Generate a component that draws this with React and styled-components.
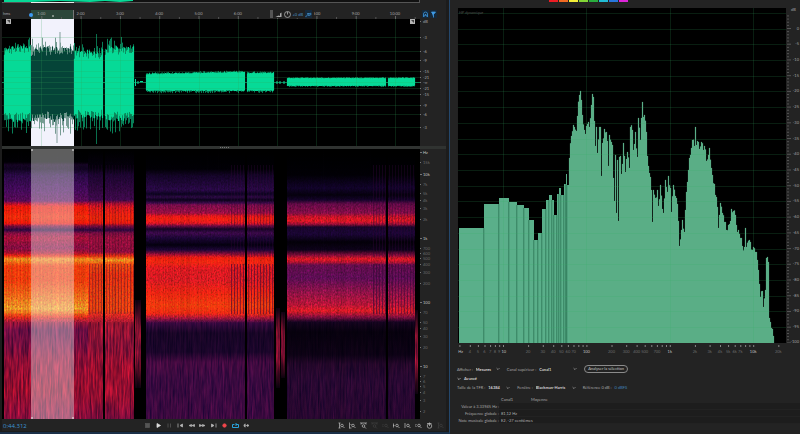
import React from "react";
import styled, { createGlobalStyle } from "styled-components";

const GlobalStyle = createGlobalStyle`
  * {
    box-sizing: border-box;
  }

  body {
    margin: 0;
    background: #232323;
    color: #a6a6a6;
    font-family: Lato, "Liberation Sans", sans-serif;
    font-size: 4px;
    line-height: 7px;
  }

  button,
  select {
    margin: 0;
    padding: 0;
    border: 0;
    background: none;
    color: inherit;
    font: inherit;
  }
`;

const Workspace = styled.main`
  display: grid;
  grid-template-columns: 9fr 7fr;
  grid-template-rows: minmax(0, 1fr);
  height: 100vh;
`;

const Editor = styled.section`
  display: grid;
  grid-template-columns: minmax(0, 1fr) 26px;
  grid-template-rows: 9px 10px minmax(0, 127fr) 3px minmax(0, 270fr) 12px;
  padding: 0 3px 1px 2px;
  border-right: 1px solid #24476b;
  border-bottom: 2px solid #1b3048;
  background: #1c1c1c;
`;

const Plot = styled.svg`
  display: block;
  width: 100%;
  height: 100%;
  min-height: 0;
  background: #000;
`;

const Scale = styled.svg`
  display: block;
  width: 100%;
  height: 100%;
  min-height: 0;
  background: #232323;
  fill: ${({ $dim }) => ($dim ? "#6c6c6c" : "#a6a6a6")};
  font-size: 4px;
`;

const Overview = styled.div`
  background: #232323;
`;

const OverviewTrack = styled.svg`
  display: block;
  width: 100%;
  height: 4px;
`;

const Corner = styled.div`
  background: #232323;
`;

const Ruler = styled.div`
  position: relative;
  min-width: 0;
`;

const Hud = styled.div`
  position: absolute;
  top: 1px;
  left: 64%;
  display: flex;
  align-items: center;
  gap: 2px;
  height: 8px;
  padding-right: 2px;
  background: #202020;
  color: #4a94c8;

  &::before {
    content: "";
    width: 3px;
    height: 8px;
    background: #555;
  }
`;

const RulerTools = styled.div`
  display: flex;
  align-items: center;
  gap: 1px;
  padding-left: 2px;
  background: #232323;
  color: #3f9be6;
`;

const Divider = styled.div`
  grid-column: 1 / -1;
  display: flex;
  justify-content: center;
  align-items: center;
  background: #303331;

  &::after {
    content: "";
    width: 9px;
    border-top: 1px dotted #777;
  }
`;

const Transport = styled.footer`
  grid-column: 1 / -1;
  display: flex;
  align-items: center;
  background: #232323;
`;

const Timecode = styled.output`
  width: 140px;
  padding: 3px 0 0 1px;
  color: #3d94d2;
  font-family: "Open Sans", sans-serif;
  font-size: 6px;
`;

const ButtonGroup = styled.div`
  display: flex;
  margin-left: ${({ $end }) => ($end ? "auto" : 0)};
`;

const IconButton = styled.button`
  display: grid;
  place-items: center;
  width: ${({ $small }) => ($small ? "7px" : "11px")};
  height: 8px;
  color: ${({ $color }) => $color || "#b5b5b5"};
  background: ${({ $small }) => ($small ? "#15293b" : "none")};
`;

const Glyph = styled.svg`
  display: block;
  width: 7px;
  height: 7px;
  fill: none;
  stroke: currentColor;
  stroke-width: 1.5;
`;

const Analysis = styled.section`
  display: flex;
  flex-direction: column;
  min-width: 0;
  padding-left: 7px;
  background: #232323;
`;

const Presets = styled.div`
  display: flex;
  gap: 1px;
  height: 8px;
  padding-left: 92px;
`;

const Preset = styled.button`
  width: 9px;
  height: 2px;
  background: ${({ $color }) => $color};
`;

const SpectrumArea = styled.div`
  flex: 1;
  display: grid;
  grid-template-columns: minmax(0, 1fr) 14px;
  grid-template-rows: minmax(0, 1fr) 12px;
  min-height: 0;
`;

const Settings = styled.div`
  display: flex;
  flex-direction: column;
  gap: 2px;
  padding-top: 10px;
`;

const SettingsRow = styled.div`
  display: flex;
  align-items: center;
  gap: 6px;
  min-height: ${({ $tall }) => ($tall ? "8px" : "7px")};
`;

const Field = styled.label`
  display: flex;
  align-items: center;
  gap: 3px;
  white-space: nowrap;
`;

const Picker = styled.span`
  display: flex;
  align-items: center;
  width: ${({ $width }) => $width}px;

  svg {
    flex: none;
    width: 4px;
    height: 4px;
    margin-left: -5px;
    pointer-events: none;
  }
`;

const Select = styled.select`
  appearance: none;
  width: 100%;
  height: 7px;
  color: #d2d2d2;
  font-weight: 700;
`;

const PillButton = styled.button`
  height: 8px;
  padding: 0 3px;
  border: 1px solid #8b8b8b;
  border-radius: 4px;
  color: #c4c4c4;
  line-height: 6px;
`;

const Disclosure = styled.button`
  display: flex;
  align-items: center;
  gap: 3px;
  height: 7px;
  color: #cccccc;
  font-weight: 700;

  svg {
    width: 4px;
    height: 4px;
  }
`;

const Reference = styled.span`
  button {
    margin-left: 2px;
    color: #4185bd;
  }
`;

const Readings = styled.table`
  width: 100%;
  margin: 2px 0 10px;
  border-collapse: collapse;
  table-layout: fixed;

  th,
  td {
    height: 7px;
    padding: 0 2px;
    font-weight: 400;
    text-align: left;
    white-space: nowrap;
  }

  thead th {
    height: 8px;
  }

  tbody th {
    padding: 0;
    text-align: right;
  }

  tbody td {
    background: #1d1d1d;
    color: #b0b0b0;
    box-shadow: inset 0 -1px #222;
  }
`;

const Col = styled.col`
  width: ${({ $width }) => $width}px;
`;

// ---------- data ----------

function random(seed) {
  let s = seed;
  return () => {
    s = (s * 16807) % 2147483647;
    return s / 2147483647;
  };
}

const GREEN = "#06da97";
const minutes = [1, 2, 3, 4, 5, 6, 7, 8, 9, 10];
const minuteX = (m) => 2 + 39.3 * m;

// from, to, height above the axis at start and end, height below, spikes
const clips = [
  [4, 31, 31, 32, 37, 15],
  [31, 74, 30, 30, 36, 16],
  [74, 103, 27, 27, 33, 15],
  [105, 134, 31, 32, 36, 15],
  [146, 245, 8, 10, 9, 2],
  [247, 274, 9, 9, 9, 2],
  [287, 386, 4, 4, 4, 1],
  [388, 415, 4, 4, 4, 1],
];

function clipPaths([from, to, start, end, below, spike], seed) {
  const rnd = random(seed);
  let core = "";
  let peaks = "";
  for (let x = from; x < to; x++) {
    const up = start + ((end - start) * (x - from)) / (to - from);
    const c = x + 0.5;
    const jitter = spike * 0.65;
    core += `M${c} ${82 - up - (rnd() - 0.4) * jitter}V${82 + below * 0.96 + (rnd() - 0.5) * jitter}`;
    const high = rnd() ** 2 * spike * 0.8;
    const low = rnd() ** 2 * spike * 1.1;
    peaks += `M${c} ${82 - up - high - spike * 0.1}V${82 + below + low}`;
  }
  return { core, peaks };
}

const dbMarks = [
  [21, "dB"], [37, "-3"], [51, "-6"], [60, "-9"], [71, "-15"], [77, "-21"], [82, "-∞"],
  [88, "-21"], [94, "-15"], [105, "-9"], [114, "-6"], [127, "-3"],
];

const hzMarks = [
  [152, "Hz", 1], [162, "15k"], [174, "10k", 1], [184, "7k"], [193, "5k"], [200, "4k"],
  [208, "3k"], [219, "2k"], [238, "1k", 1], [248, "700"], [253, "600"], [258, "500"],
  [264, "400"], [272, "300"], [283, "200"], [302, "100", 1], [312, "70"], [322, "50"],
  [328, "40"], [336, "30"], [347, "20"], [366, "10", 1], [376, "7"], [381, "6"],
  [386, "5"], [392, "4"], [400, "3"], [411, "2"],
];

const heat = {
  loud: [
    [149, "#000"], [162, "#020005"], [165, "#160524"], [169, "#10041f"], [175, "#290a44"],
    [190, "#430b59"], [201, "#580b55"], [204, "#bd102b"], [207, "#f51b08"], [212, "#f4200a"],
    [217, "#ff2d0b"], [223, "#ff1908"], [226, "#780d3b"], [230, "#27083c"], [233, "#820d42"],
    [238, "#a41036"], [248, "#820d42"], [253, "#a8102d"], [256, "#ef2b10"], [259, "#ff8e1f"],
    [262, "#ff6d15"], [266, "#fc3d0c"], [280, "#f93b0c"], [292, "#ff5c14"], [303, "#ff801f"],
    [309, "#ff9826"], [313, "#ff6818"], [317, "#e02d19"], [323, "#981440"], [330, "#6c0e4a"],
    [346, "#7d0f46"], [360, "#960f3c"], [390, "#a00f34"], [419, "#8a0d42"],
  ],
  pulse: [
    [149, "#000"], [168, "#06020e"], [175, "#1b0630"], [200, "#3f0a4c"], [204, "#b51130"],
    [208, "#e01a18"], [218, "#ff260a"], [223, "#f51b0d"], [226, "#770d3a"], [230, "#27083c"],
    [233, "#780e40"], [238, "#98103c"], [252, "#900e3c"], [256, "#f23310"], [260, "#ff9421"],
    [264, "#ff4d10"], [275, "#f0320f"], [300, "#f4420f"], [310, "#f2430e"], [316, "#d42624"],
    [324, "#9c1538"], [345, "#8e123d"], [370, "#a61035"], [400, "#9c1038"], [419, "#800d44"],
  ],
  mid: [
    [149, "#000"], [169, "#020106"], [176, "#140527"], [190, "#280944"], [194, "#0d0420"],
    [197, "#2a0a40"], [200, "#0c031c"], [203, "#3a0a48"], [205, "#770d49"], [213, "#980f42"],
    [216, "#dc171b"], [219, "#ff2010"], [223, "#e21820"], [226, "#680b43"], [229, "#150524"],
    [233, "#3c0a4a"], [238, "#1c0635"], [245, "#050110"], [250, "#1e0736"], [254, "#8a0e36"],
    [258, "#f51e0f"], [262, "#fc2711"], [268, "#da1a20"], [280, "#d41b22"], [293, "#ef2512"],
    [306, "#ff3b0e"], [313, "#f52a12"], [318, "#a31638"], [323, "#3b0a47"], [333, "#1a062b"],
    [352, "#1c062f"], [362, "#460b48"], [378, "#3e0b48"], [419, "#400a48"],
  ],
  quiet: [
    [149, "#000"], [175, "#020106"], [188, "#12042a"], [195, "#06020e"], [200, "#15042a"],
    [204, "#630b47"], [213, "#850e47"], [217, "#c71427"], [221, "#dd1723"], [224, "#9f1037"],
    [227, "#18062a"], [234, "#1b0635"], [242, "#040109"], [250, "#0e031a"], [255, "#800d3a"],
    [259, "#dd1923"], [262, "#b4132e"], [265, "#650e4c"], [278, "#5c0e54"], [292, "#8f1348"],
    [305, "#b81637"], [311, "#dc1c25"], [317, "#80103e"], [322, "#170523"], [332, "#080210"],
    [355, "#0e0318"], [364, "#26082f"], [380, "#2b0938"], [419, "#2a0836"],
  ],
};

const bands = [
  [4, 88, "loud"],
  [88, 103, "pulse", 0.35],
  [105, 134, "pulse", 0.35],
  [146, 230, "mid"],
  [230, 245, "mid", 0.55],
  [247, 274, "mid", 0.5],
  [287, 372, "quiet"],
  [372, 386, "quiet", 0.6],
  [388, 415, "quiet", 0.5],
];

// x, top of the full-band level
const spectrum = [
  [569, 158], [571, 136], [573, 125], [574, 127], [576, 131], [577, 116], [579, 95], [580, 91],
  [581, 100], [582, 115], [584, 130], [585, 134], [586, 126], [588, 122], [589, 127], [591, 105],
  [592, 94], [593, 97], [594, 121], [595, 146], [596, 127], [597, 153], [599, 127], [600, 127],
  [601, 176], [602, 143], [604, 129], [606, 132], [607, 141], [608, 166], [609, 135], [611, 142],
  [612, 145], [613, 178], [614, 201], [615, 155], [616, 213], [617, 160], [618, 221], [619, 157],
  [620, 156], [621, 174], [622, 164], [623, 143], [625, 172], [627, 152], [629, 168], [630, 127],
  [632, 130], [633, 150], [635, 132], [637, 157], [638, 118], [640, 140], [641, 118], [642, 102],
  [643, 117], [644, 115], [646, 132], [647, 156], [648, 166], [650, 177], [651, 190], [652, 222],
  [653, 190], [655, 198], [657, 190], [658, 206], [660, 185], [662, 209], [663, 213], [665, 180],
  [667, 192], [668, 176], [670, 188], [671, 212], [673, 185], [675, 196], [677, 204], [678, 221],
  [679, 246], [681, 230], [682, 220], [684, 232], [685, 210], [686, 192], [687, 182], [688, 170],
  [689, 158], [691, 148], [692, 140], [694, 146], [695, 127], [696, 145], [698, 142], [699, 149],
  [701, 142], [703, 150], [704, 146], [706, 161], [708, 155], [709, 148], [711, 168], [712, 175],
  [714, 184], [715, 195], [717, 207], [718, 228], [719, 215], [720, 203], [722, 213], [724, 222],
  [726, 230], [728, 225], [730, 221], [731, 209], [733, 211], [735, 215], [737, 232], [738, 230],
  [740, 238], [742, 246], [744, 247], [745, 228], [746, 247], [749, 240], [750, 242], [752, 250],
  [753, 247], [755, 252], [757, 260], [758, 270], [760, 297], [762, 291], [763, 307], [765, 290],
  [766, 258], [767, 257], [768, 262], [769, 318], [771, 328], [773, 336], [774, 343],
];

const lowBins = [
  [459, 228], [484, 204], [499, 198], [509, 202], [517, 205], [524, 208], [529, 220], [534, 240],
  [538, 233], [542, 209], [546, 200], [549, 195], [552, 200], [554, 215], [557, 194], [559, 188],
  [561, 195], [564, 184], [566, 174], [567, 185], [569, 158],
];

const freqX = (f) => 503 + 83.4 * Math.log10(f / 10);
const dbY = (db) => 28.5 - db * 3.144;
const levels = Array.from({ length: 21 }, (_, i) => -5 * i);

const freqLabels = [
  [3.1, "Hz", 1], [4, "4"], [5, "5"], [6, "6"], [7, "7"], [8, "8"], [9, "9"], [10.2, "10", 1],
  [20, "20"], [30, "30"], [40, "40"], [50, "50"], [60, "60"], [70, "70"], [100, "100", 1],
  [200, "200"], [300, "300"], [400, "400"], [500, "500"], [700, "700"], [1000, "1k", 1],
  [2000, "2k"], [3000, "3k"], [4000, "4k"], [5000, "5k"], [6000, "6k"], [7000, "7k"],
  [10000, "10k", 1], [20000, "20k"],
];

const freqTicks = [1, 10, 100, 1000, 10000]
  .flatMap((d) => [1, 2, 3, 4, 5, 6, 7, 8, 9].map((n) => n * d))
  .filter((f) => f > 2 && f < 24000);

const presetColors = [
  "#ed1c24", "#f26a22", "#f4ee37", "#83d536", "#29ad3e", "#22bcd4", "#2877dc", "#dd25d8",
];

const readings = [
  ["Valeur à 3.33945 Hz :", ""],
  ["Fréquence globale :", "81,12 Hz"],
  ["Note musicale globale :", "E2, -27 centièmes"],
];

const lens = (x, y) => (
  <>
    <circle cx={x} cy={y} r="2.6" />
    <path d={`M${x + 2} ${y + 2}l3 3`} />
  </>
);

const glyphs = {
  stop: <rect x="3" y="3" width="8" height="8" fill="currentColor" />,
  play: <path d="M4 3l7 4-7 4z" fill="currentColor" />,
  pause: <path d="M4 3v8M9 3v8" strokeWidth="2" />,
  prev: <path d="M2 3v8M11 4v6L6 7z" fill="currentColor" />,
  rewind: <path d="M7 5v4L2 7zM13 5v4L8 7z" fill="currentColor" />,
  forward: <path d="M1 5v4l5-2zM7 5v4l5-2z" fill="currentColor" />,
  next: <path d="M12 3v8M3 4v6l5-3z" fill="currentColor" />,
  record: <circle cx="7" cy="7" r="3.5" fill="currentColor" />,
  loop: <path d="M4 5H1v6h12V5H8M9 2L6 5l3 3" strokeWidth="2" />,
  skip: <path d="M5 4a3 3 0 100 6M5 7h5M9 5l3 2-3 2z" fill="currentColor" stroke="currentColor" />,
  ampIn: <><path d="M1 2h4M3 2v10M1 12h4" />{lens(8, 7)}</>,
  ampOut: <><path d="M1 1v12M1 12h4M3 5h2" />{lens(8, 7)}</>,
  full: <><path d="M0 2h14M2 5l2-3M12 5l-2-3" />{lens(7, 8)}</>,
  zoomIn: <><path d="M1 3v8M0 7h3" />{lens(8, 7)}</>,
  zoomOut: <><path d="M2 2v10" />{lens(8, 7)}</>,
  zoomSel: <><path d="M3 4L0 7l3 3" />{lens(8, 7)}</>,
  clock: <><circle cx="7" cy="8" r="4.5" /><path d="M7 8V1M2 3h9" /></>,
  magnet: <path d="M3 12V6a4 4 0 018 0v6M3 10h3V7h2v3h3" />,
  marker: <path d="M3 2h8L7 7v6M3 2l4 5" fill="currentColor" />,
  pin: <path d="M1 12l5-5M5 5h4l2 3-4 1zM10 4l3 2" />,
  chevron: <path d="M2 4l5 5 5-5" strokeWidth="2.5" />,
  bars: <path d="M1 12h12V3l-3 2v5l-3-1-4 2z" fill="#aaa" stroke="none" />,
  knob: <><circle cx="7" cy="7" r="6" stroke="#bbb" /><path d="M7 2v5" stroke="#bbb" /></>,
};

const transportButtons = [
  ["stop", "Stop", "#555"], ["play", "Play", "#ddd"], ["pause", "Pause", "#4c4c4c"],
  ["prev", "Previous"], ["rewind", "Rewind"], ["forward", "Fast forward"], ["next", "Next"],
  ["record", "Record", "#f0464b"], ["loop", "Loop", "#29a3dc"], ["skip", "Skip selection"],
];

const zoomButtons = [
  ["ampIn", "Zoom in amplitude"], ["ampOut", "Zoom out amplitude"], ["full", "Zoom full"],
  ["full", "Zoom reset", "#3d3d3d"], ["zoomSel", "Zoom to point", "#3d3d3d"],
  ["zoomIn", "Zoom in time"], ["zoomOut", "Zoom out time"], ["zoomSel", "Zoom to selection"],
  ["clock", "Timed zoom"], ["ampIn", "Zoom track", "#3d3d3d"],
];

// ---------- components ----------

function Icon({ name }) {
  return (
    <Glyph viewBox="0 0 14 14" aria-hidden="true">
      {glyphs[name]}
    </Glyph>
  );
}

function Buttons({ items, end }) {
  return (
    <ButtonGroup $end={end}>
      {items.map(([icon, label, color]) => (
        <IconButton key={label} aria-label={label} $color={color}>
          <Icon name={icon} />
        </IconButton>
      ))}
    </ButtonGroup>
  );
}

function Dropdown({ label, value, width }) {
  return (
    <Field>
      {label}
      <Picker $width={width}>
        <Select defaultValue={value}>
          <option>{value}</option>
        </Select>
        <Icon name="chevron" />
      </Picker>
    </Field>
  );
}

function TimeRuler() {
  const at = (x) => `${((x - 2) / 418) * 100}%`;
  return (
    <Ruler>
      <Scale>
        <rect x={at(31)} y="1" width="10.3%" height="9" fill="#2c473a" />
        <text x="1" y="6">hms</text>
        {minutes.map((m) => (
          <React.Fragment key={m}>
            {m !== 7 && (
              <text x={at(minuteX(m))} y="6" textAnchor="middle">{m}:00</text>
            )}
            <rect x={at(minuteX(m))} y="7" width="1" height="3" fill="#666" />
            <rect x={at(minuteX(m + 0.5))} y="8" width="1" height="2" fill="#555" />
          </React.Fragment>
        ))}
        <circle cx={at(31)} cy="6" r="2" fill="#3e9af0" />
        <rect x={at(52)} y="6" width="2" height="2" fill="#819087" />
        <rect x={at(73)} y="1" width="1" height="9" fill="#777" />
      </Scale>
      <Hud>
        <Icon name="bars" />
        <Icon name="knob" />
        <span>+0 dB</span>
        <IconButton $small $color="#4a9fe0" aria-label="Pin">
          <Icon name="pin" />
        </IconButton>
      </Hud>
    </Ruler>
  );
}

function Waveform() {
  return (
    <Plot viewBox="2 19 418 127" preserveAspectRatio="none">
      <rect x="31" y="19" width="43" height="127" fill="#f2f2fc" />
      <path d="M2 82.5H420" stroke="#067350" />
      {clips.map((clip, i) => {
        const { core, peaks } = clipPaths(clip, 731 + i * 97);
        const selected = i === 1;
        return (
          <g key={clip[0]}>
            <path d={peaks} stroke={selected ? "#789c94" : "#087e57"} />
            <path d={core} stroke={selected ? "#054438" : GREEN} strokeWidth="1.2" />
          </g>
        );
      })}
      <path d="M60 32V50M57 117V143" stroke="#829e9b" />
      <path d="M96.500 34V54M96.500 116V144" stroke="#0a6f4d" />
      <path d="M135.500 79v7M138 81v3M140 81.500h3M277 81v3M280 81v3M284 81v3" stroke={GREEN} />
      <g stroke="#31a65a" strokeOpacity="0.2">
        {minutes.map((m) => (
          <path key={m} d={`M${Math.round(minuteX(m))}.5 19V146`} />
        ))}
        {dbMarks.slice(1).map(([y]) => (
          <path key={y} d={`M2 ${y}.5H420`} />
        ))}
      </g>
      {[6, 410].map((x) => (
        <g key={x}>
          <rect x={x} y="19" width="5" height="5" fill="#b5b5b5" />
          <path d={`M${x + 1} 20l3 3v-3z`} fill="#444" />
        </g>
      ))}
    </Plot>
  );
}

function Spectrogram() {
  return (
    <Plot viewBox="2 149 418 270" preserveAspectRatio="none">
      <defs>
        {Object.entries(heat).map(([name, stops]) => (
          <linearGradient key={name} id={name} gradientUnits="userSpaceOnUse" x1="0" y1="149" x2="0" y2="419">
            {stops.map(([y, color]) => (
              <stop key={y} offset={(y - 149) / 270} stopColor={color} />
            ))}
          </linearGradient>
        ))}
        <linearGradient id="tail" x1="0" y1="0" x2="0" y2="1">
          <stop offset="0" stopColor="#0c0212" />
          <stop offset="0.3" stopColor="#7a1030" />
          <stop offset="0.6" stopColor="#8d1138" />
          <stop offset="1" stopColor="#0a020e" />
        </linearGradient>
        <filter id="grain" x="0" y="0" width="1" height="1" colorInterpolationFilters="sRGB">
          <feTurbulence type="fractalNoise" baseFrequency="0.7 0.5" numOctaves="2" seed="4" />
          <feColorMatrix values="1 0 0 0 0  0 1.3 0 0 -0.15  1 0 0 0 0  0 0 0 0 1" />
          <feComposite in2="SourceGraphic" operator="arithmetic" k1="0.9" k3="0.62" />
        </filter>
        <filter id="streaks" x="0" y="0" width="1" height="1" colorInterpolationFilters="sRGB">
          <feTurbulence type="fractalNoise" baseFrequency="0.6 0.05" numOctaves="3" seed="9" />
          <feColorMatrix values="1.4 0 0 0 -0.2  1.4 0 0 0 -0.2  0.5 0 0 0 0.2  0 0 0 0 1" />
          <feComposite in2="SourceGraphic" operator="arithmetic" k1="1" k3="0.5" />
        </filter>
      </defs>

      {bands.map(([from, to, level, stripes]) => {
        const width = to - from;
        const rnd = random(from * 31 + 7);
        const lines = Array.from({ length: width }, (_, i) => i);
        return (
          <g key={from}>
            <rect x={from} y="149" width={width} height="174" fill={`url(#${level})`} filter="url(#grain)" />
            <rect x={from} y="322" width={width} height="97" fill={`url(#${level})`} filter="url(#streaks)" />
            {lines.map((i) => (
              <rect key={i} x={from + i} y="149" width="1" height="270" opacity={rnd() * 0.13} />
            ))}
            {stripes &&
              lines
                .filter((i) => i % 3 === 1)
                .map((i) => (
                  <g key={i} fill="#35063a">
                    <rect x={from + i} y="165" width="1" height="92" opacity={stripes * 0.6} />
                    <rect x={from + i} y="264" width="1" height="50" opacity={stripes} />
                  </g>
                ))}
          </g>
        );
      })}

      {/* low-frequency tails between the clips */}
      <g filter="url(#streaks)">
        <rect x="135" y="300" width="6" height="88" fill="url(#tail)" />
        <rect x="276" y="308" width="4" height="80" fill="url(#tail)" />
        <rect x="281" y="312" width="4" height="66" fill="url(#tail)" />
        <rect x="415" y="310" width="3" height="84" fill="url(#tail)" />
      </g>
      <rect x="31" y="149" width="43" height="270" fill="#fff" opacity="0.37" />
      <path d="M32 149v2M73 149v2M32 417v2M73 417v2" stroke="#eee" />
    </Plot>
  );
}

function SideScale({ marks, top, height, major }) {
  return (
    <Scale $dim={major}>
      {marks.map(([y, text, bright], i) => {
        const pos = `${((y - top) / height) * 100}%`;
        return (
          <React.Fragment key={i}>
            <text x="3" dy="2" y={pos} fill={bright ? "#c4c4c4" : undefined}>{text}</text>
            <rect x="0" y={pos} width={bright ? 2 : 1} height="1" fill="#777" />
          </React.Fragment>
        );
      })}
    </Scale>
  );
}

function Spectrum() {
  const rnd = random(5501);
  let body = "";
  for (let i = 0; i < spectrum.length - 1; i++) {
    const [x, y] = spectrum[i];
    const [nextX, nextY] = spectrum[i + 1];
    for (let s = x; s < nextX; s++) {
      const mix = (s - x) / (nextX - x);
      const top = y + (nextY - y) * mix + (mix ? (rnd() - 0.5) * 8 : 0);
      body += `M${s} 343V${top}h1V343z`;
    }
  }
  return (
    <Plot viewBox="457 8 329 335" preserveAspectRatio="none">
      <rect x="457" y="8" width="1" height="335" fill="#222" />
      <path d={body} fill="#5aaf8a" stroke="#5aaf8a" strokeWidth="0.2" />
      {lowBins.slice(0, -1).map(([x, y], i) => (
        <g key={x}>
          <rect x={x} y={y} width={lowBins[i + 1][0] - x} height={343 - y} fill="#5aaf8a" />
          {i > 0 && <rect x={x - 0.500} y={Math.max(y, lowBins[i - 1][1])} width="0.7" height="200" fill="#236a4b" />}
        </g>
      ))}
      <g stroke="#36b262" strokeOpacity="0.17">
        {levels.map((db) => (
          <path key={db} d={`M458 ${Math.round(dbY(db))}.5H786`} />
        ))}
        <path d="M458 13.500H786" />
        {[10, 100, 1000, 10000].map((f) => (
          <path key={f} d={`M${Math.round(freqX(f))}.5 8V343`} />
        ))}
      </g>
      <text x="459" y="14" fill="#4d4d4d" fontSize="4" fontStyle="italic">HP dynamique</text>
    </Plot>
  );
}

function LevelScale() {
  const at = (y) => `${((y - 8) / 335) * 100}%`;
  const ticks = Array.from({ length: 105 }, (_, i) => 4 - i);
  return (
    <Scale>
      {ticks.map((db) => (
        <rect key={db} x="1" y={at(dbY(db) - 0.5)} width={db % 5 ? 2 : 4} height="1" fill="#555" />
      ))}
      <text x="5" y="3">dB</text>
      {levels.map((db) => (
        <text key={db} x="13" y={at(dbY(db))} dy={db === -100 ? 0 : 1} textAnchor="end">{db}</text>
      ))}
    </Scale>
  );
}

function FrequencyScale() {
  const at = (f) => `${((freqX(f) - 457) / 329) * 100}%`;
  return (
    <Scale $dim>
      {freqTicks.map((f) => (
        <rect key={f} x={at(f)} y="2" width="1" height="2" fill="#858585" />
      ))}
      {freqLabels.map(([f, text, bright]) => (
        <text key={text} x={at(f)} y="10" textAnchor="middle" fill={bright ? "#c0c0c0" : undefined}>
          {text}
        </text>
      ))}
    </Scale>
  );
}

export default function App() {
  return (
    <>
      <GlobalStyle />
      <Workspace>
        <Editor>
          <Overview>
            <OverviewTrack viewBox="2 0 418 4" preserveAspectRatio="none">
              <rect x="2" y="0" width="417" height="2" fill="#111" />
              <path d="M4 0H133V1L120 2L105 1L90 2L60 1L30 2L4 2z" fill={GREEN} />
              <rect x="2" y="2" width="417" height="1" fill="#555" />
              <rect x="31" y="2" width="43" height="1" fill="#e8e8e8" />
              <rect x="419" y="0" width="1" height="3" fill="#555" />
            </OverviewTrack>
          </Overview>
          <Corner />
          <TimeRuler />
          <RulerTools>
            <IconButton $small $color="#3f9be6" aria-label="Snap">
              <Icon name="magnet" />
            </IconButton>
            <IconButton $small $color="#3f9be6" aria-label="Add marker">
              <Icon name="marker" />
            </IconButton>
          </RulerTools>
          <Waveform />
          <SideScale marks={dbMarks} top={19} height={127} />
          <Divider />
          <Spectrogram />
          <SideScale marks={hzMarks} top={149} height={270} major />
          <Transport>
            <Timecode>0:44.312</Timecode>
            <Buttons items={transportButtons} />
            <Buttons items={zoomButtons} end />
          </Transport>
        </Editor>

        <Analysis>
          <Presets>
            {presetColors.map((color, i) => (
              <Preset key={color} $color={color} aria-label={`Hold ${i + 1}`} />
            ))}
          </Presets>
          <SpectrumArea>
            <Spectrum />
            <LevelScale />
            <FrequencyScale />
          </SpectrumArea>
          <Settings>
            <SettingsRow $tall>
              <Dropdown label="Afficher :" value="Mesures" width={25} />
              <Dropdown label="Canal supérieur :" value="Canal1" width={39} />
              <PillButton>Analyser la sélection</PillButton>
            </SettingsRow>
            <SettingsRow>
              <Disclosure aria-expanded="true">
                <Icon name="chevron" />
                Avancé
              </Disclosure>
            </SettingsRow>
            <SettingsRow>
              <Dropdown label="Taille de la TFR :" value="16384" width={23} />
              <Dropdown label="Fenêtre :" value="Blackman-Harris" width={41} />
              <Reference>
                Référence 0 dB : <button>0 dBFS</button>
              </Reference>
            </SettingsRow>
            <Readings>
              <colgroup>
                <Col $width={42} />
                <Col $width={30} />
                <col />
              </colgroup>
              <thead>
                <tr>
                  <td />
                  <th scope="col">Canal1</th>
                  <th scope="col">Moyenne</th>
                </tr>
              </thead>
              <tbody>
                {readings.map(([label, value]) => (
                  <tr key={label}>
                    <th scope="row">{label}</th>
                    <td>{value}</td>
                    <td />
                  </tr>
                ))}
              </tbody>
            </Readings>
          </Settings>
        </Analysis>
      </Workspace>
    </>
  );
}
